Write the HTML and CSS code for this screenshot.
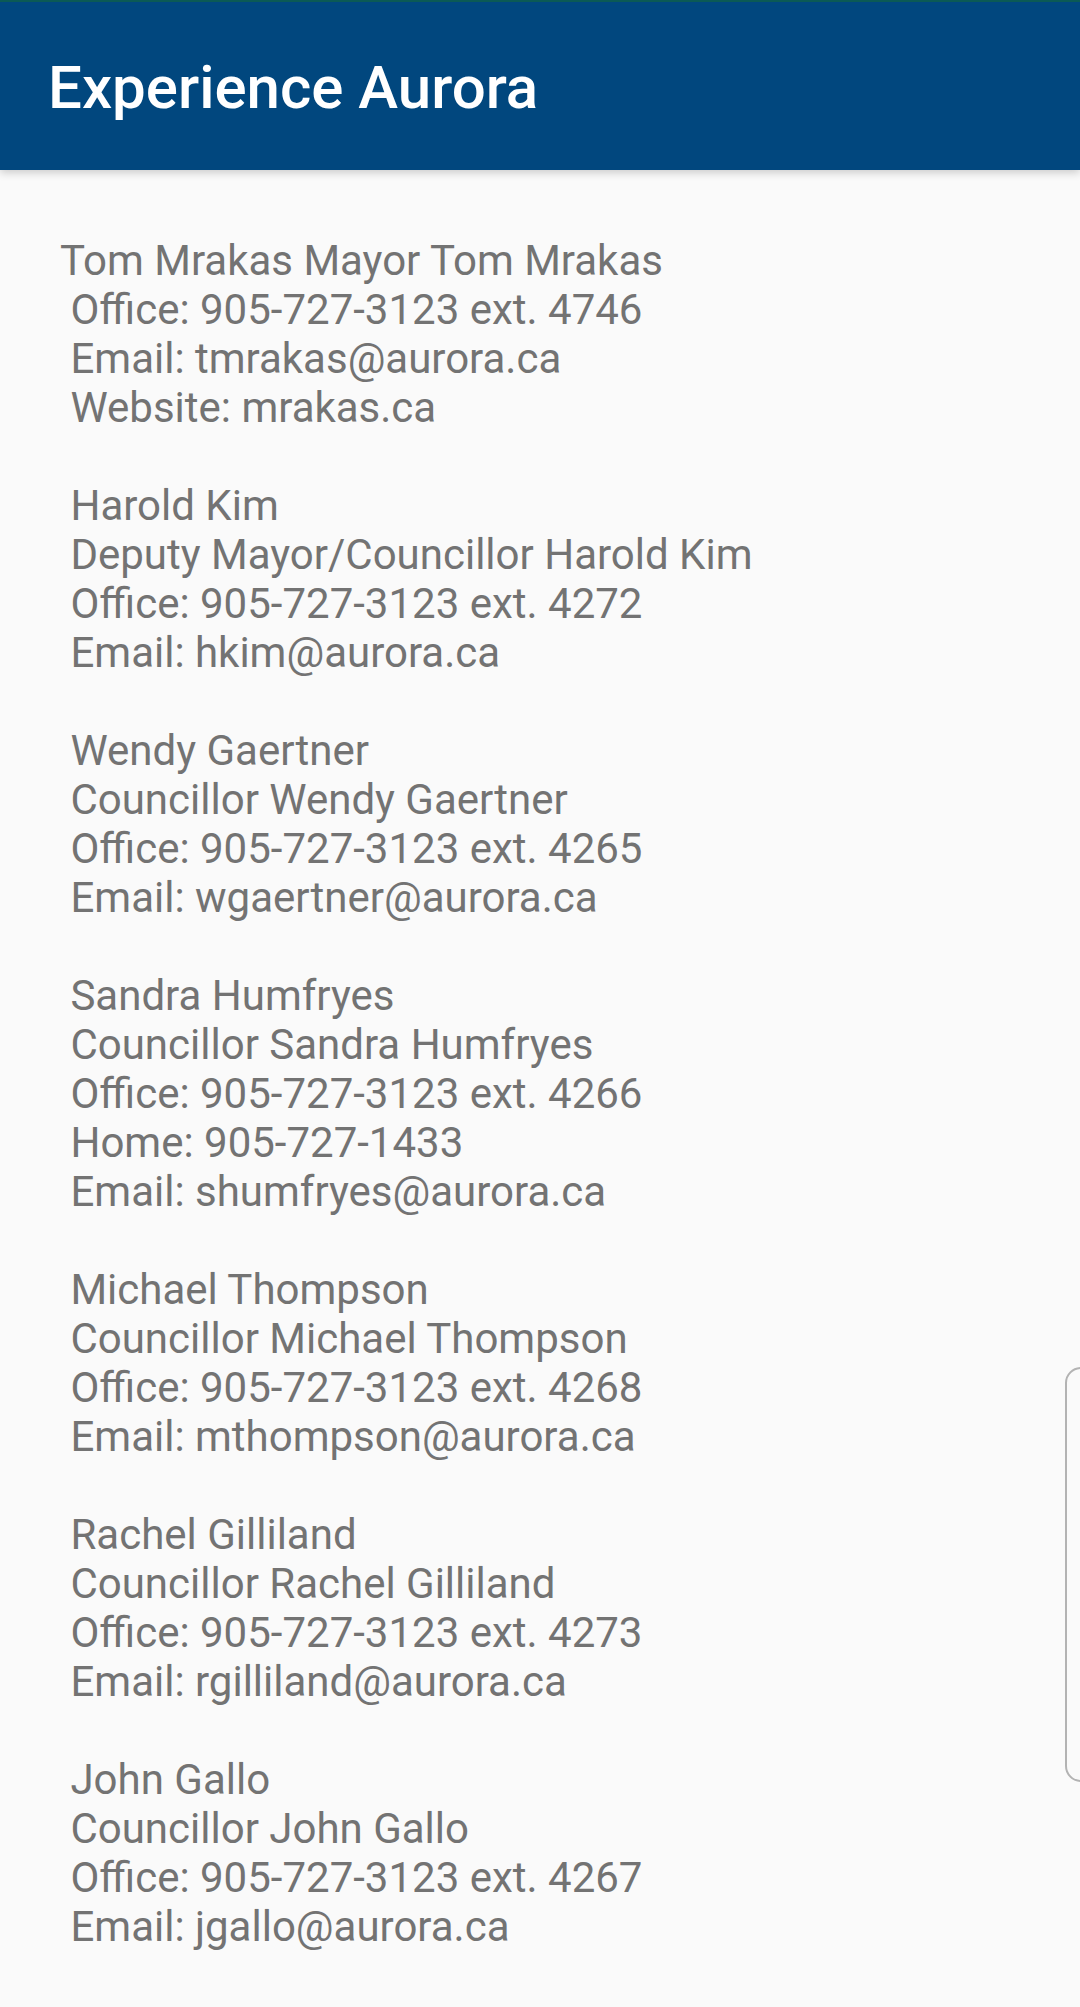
FILE: index.html
```html
<!DOCTYPE html>
<html lang="en">
<head>
<meta charset="utf-8">
<title>Experience Aurora</title>
<link rel="stylesheet" href="styles.css">
</head>
<body>
<header class="toolbar">
  <h1 class="toolbar-title">Experience Aurora</h1>
</header>
<main class="content">
<p class="contacts">Tom Mrakas Mayor Tom Mrakas
 Office: 905-727-3123 ext. 4746
 Email: tmrakas@aurora.ca
 Website: mrakas.ca

 Harold Kim
 Deputy Mayor/Councillor Harold Kim
 Office: 905-727-3123 ext. 4272
 Email: hkim@aurora.ca

 Wendy Gaertner
 Councillor Wendy Gaertner
 Office: 905-727-3123 ext. 4265
 Email: wgaertner@aurora.ca

 Sandra Humfryes
 Councillor Sandra Humfryes
 Office: 905-727-3123 ext. 4266
 Home: 905-727-1433
 Email: shumfryes@aurora.ca

 Michael Thompson
 Councillor Michael Thompson
 Office: 905-727-3123 ext. 4268
 Email: mthompson@aurora.ca

 Rachel Gilliland
 Councillor Rachel Gilliland
 Office: 905-727-3123 ext. 4273
 Email: rgilliland@aurora.ca

 John Gallo
 Councillor John Gallo
 Office: 905-727-3123 ext. 4267
 Email: jgallo@aurora.ca</p>
</main>
<div class="edge-handle"></div>
</body>
</html>
```

FILE: styles.css
```css
html, body {
  margin: 0;
  padding: 0;
}

body {
  background: #fafafa;
  font-family: Roboto, "Liberation Sans", sans-serif;
  width: 1080px;
  height: 2007px;
  overflow: hidden;
  position: relative;
}

.toolbar {
  height: 170px;
  box-sizing: border-box;
  background: #01477e;
  border-top: 2px solid #0b5a55;
  display: flex;
  align-items: center;
  padding-left: 48px;
  box-shadow: 0 3px 8px rgba(0, 0, 0, 0.18);
  position: relative;
  z-index: 1;
}

.toolbar-title {
  margin: 0;
  font-size: 60px;
  font-weight: 500;
  color: #ffffff;
  line-height: 1;
  padding-top: 4px;
}

.content {
  padding: 66px 60px 0 60px;
}

.contacts {
  margin: 0;
  white-space: pre-wrap;
  font-size: 42px;
  line-height: 49px;
  color: #737373;
}

.edge-handle {
  position: absolute;
  left: 1065px;
  top: 1367px;
  width: 40px;
  height: 415px;
  box-sizing: border-box;
  border: 2px solid #b3b3b3;
  border-radius: 16px;
  background: #fafafa;
}
```
